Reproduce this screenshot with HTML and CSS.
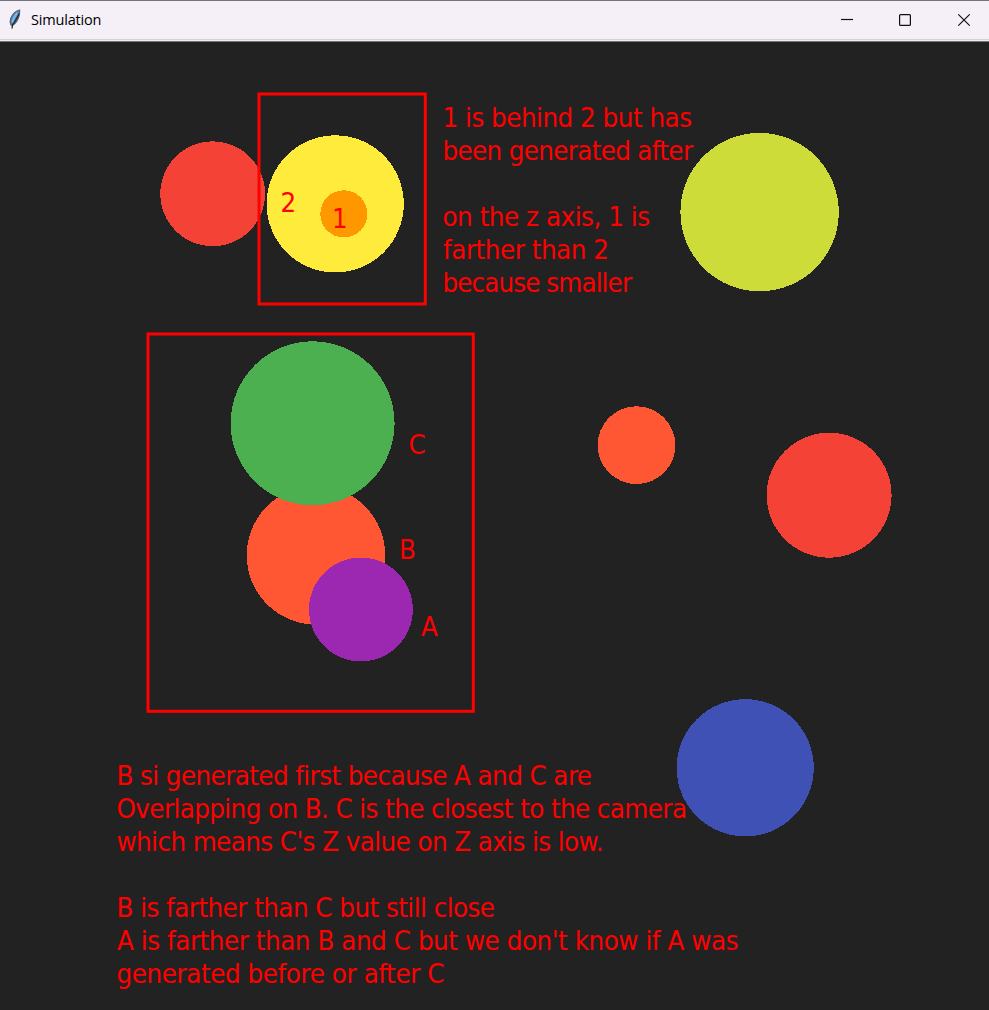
FILE: index.html
```html
<!DOCTYPE html>
<html lang="en">
<head>
<meta charset="utf-8">
<title>Simulation</title>
<link rel="stylesheet" href="styles.css">
</head>
<body>
<div class="window">
  <header class="titlebar">
    <svg class="feather" width="14" height="22" viewBox="0 0 14 22">
      <path d="M11.600 1C8 1.500 4.200 5.500 2.700 9.500c-.7 2-.7 4.500.3 6.500l1.500.4c3.500-2 5.500-5.400 6.500-9.200.5-2.200.8-4.200.6-6.200z" fill="#4a8bd0" stroke="#5c5e64" stroke-width="1.200"/>
      <path d="M9.300 3.800C7 6.500 5 9.500 4.300 13.500" fill="none" stroke="#7db8ee" stroke-width="2"/>
      <path d="M11 4.500C9.500 9 6 13.500 4.500 16L4 19.500" fill="none" stroke="#25282e" stroke-width="1.300"/>
    </svg>
    <h1 class="title"><svg width="80" height="24" viewBox="0 0 80 24"><text x="0" y="17" textLength="70.500">Simulation</text></svg></h1>
    <nav class="controls">
      <svg class="control" width="58" height="38" viewBox="0 0 58 38"><path d="M23 18.500h12"/></svg>
      <svg class="control" width="58" height="38" viewBox="0 0 58 38"><rect x="23.600" y="13.600" width="10.800" height="10.800" rx="1"/></svg>
      <svg class="control" width="58" height="38" viewBox="0 0 58 38"><path d="M24.300 13.300l11.400 11.400M35.700 13.300L24.300 24.700"/></svg>
    </nav>
  </header>
  <svg class="canvas" width="989" height="968" viewBox="0 42 989 968">
    <g class="balls">
      <circle cx="212.700" cy="193.800" r="52.400" fill="#f44336"/>
      <circle cx="335.200" cy="203.900" r="68.600" fill="#ffeb3b"/>
      <circle cx="343.900" cy="213.900" r="23.600" fill="#ff9800"/>
      <circle cx="759.600" cy="212.100" r="79.200" fill="#cddc39"/>
      <circle cx="316" cy="555.300" r="69.300" fill="#ff5733"/>
      <circle cx="312.600" cy="423.300" r="82" fill="#4caf50"/>
      <circle cx="360.900" cy="609.500" r="51.900" fill="#9c27b0"/>
      <circle cx="636.500" cy="445.200" r="38.900" fill="#ff5733"/>
      <circle cx="829.100" cy="495.200" r="62.500" fill="#f44336"/>
      <circle cx="745.200" cy="767.800" r="68.600" fill="#3f51b5"/>
    </g>
    <g class="frame">
      <rect x="259" y="94" width="166.300" height="210"/>
      <rect x="148" y="334" width="325.300" height="377.300"/>
    </g>
    <g class="note">
      <text x="280.500" y="212">2</text>
      <text x="332" y="228">1</text>
      <text x="408.500" y="454">C</text>
      <text x="399" y="559">B</text>
      <text x="421" y="636">A</text>
      <text x="442.500" y="127" textLength="249.500">1 is behind 2 but has</text>
      <text x="442.500" y="160" textLength="250.500">been generated after</text>
      <text x="442.500" y="226" textLength="207.500">on the z axis, 1 is</text>
      <text x="443" y="259" textLength="166">farther than 2</text>
      <text x="442.500" y="292" textLength="189.500">because smaller</text>
      <text x="116.500" y="785" textLength="475.500">B si generated first because A and C are</text>
      <text x="116.500" y="818" textLength="570.500">Overlapping on B. C is the closest to the camera</text>
      <text x="116.500" y="851" textLength="487">which means C's Z value on Z axis is low.</text>
      <text x="116.500" y="917" textLength="378.500">B is farther than C but still close</text>
      <text x="117" y="950" textLength="621.500">A is farther than B and C but we don't know if A was</text>
      <text x="116.500" y="983" textLength="328">generated before or after C</text>
    </g>
  </svg>
</div>
</body>
</html>
```
FILE: styles.css
```css
body {
  margin: 0;
  background: #222;
}

.window {
  display: flex;
  flex-direction: column;
  width: 989px;
  height: 1010px;
  overflow: hidden;
  background: #222;
}

.titlebar {
  box-sizing: border-box;
  flex: none;
  display: flex;
  align-items: center;
  height: 42px;
  padding: 0 0 4px 8px;
  border-top: 1px solid #77727a;
  background: linear-gradient(#f5f0f8 0 38px, #d5d2d6 38px 39px, #f0f0f0 39px 40px, #777 40px);
}

.feather {
  flex: none;
  margin-right: 9px;
}

.title {
  display: flex;
  margin: 0;
  font: 400 14.5px "Open Sans", "Noto Sans", sans-serif;
}

.controls {
  display: flex;
  margin-left: auto;
  margin-right: -3px;
}

.control {
  fill: none;
  stroke: #111;
  stroke-width: 1.2;
}

.canvas {
  display: block;
  flex: none;
}

.balls {
  shape-rendering: crispEdges;
}

.frame {
  fill: none;
  stroke: #f00;
  stroke-width: 3;
}

.note {
  fill: #f00;
  font: 27.4px "DejaVu Sans Condensed", "DejaVu Sans", sans-serif;
  font-stretch: condensed;
  font-variant-ligatures: none;
}
```
